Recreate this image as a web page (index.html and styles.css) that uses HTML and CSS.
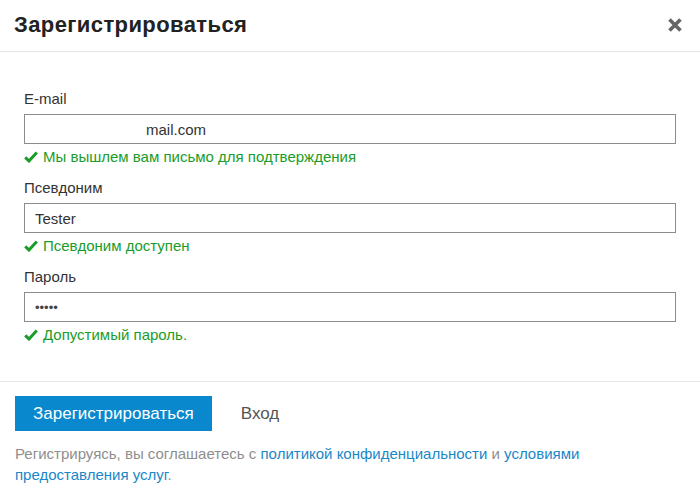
FILE: index.html
```html
<!DOCTYPE html>
<html lang="ru">
<head>
<meta charset="utf-8">
<title>Зарегистрироваться</title>
<link rel="stylesheet" href="styles.css">
</head>
<body>
<div class="dialog">
  <header class="dlg-head">
    <h1 class="dlg-title">Зарегистрироваться</h1>
    <button class="dlg-close" aria-label="Закрыть">
      <svg width="16" height="16" viewBox="0 0 16 16"><path d="M2.5 2.5 L13.5 13.5 M13.5 2.5 L2.5 13.5" stroke="#666" stroke-width="3.6" stroke-linecap="butt"/></svg>
    </button>
  </header>
  <div class="dlg-body">
    <div class="field">
      <label class="field-label">E-mail</label>
      <div class="input email"><span class="val">mail.com</span></div>
      <div class="help"><svg class="check" width="14" height="12" viewBox="0 0 14 12"><path d="M1.2 6.4 L5 10 L12.8 1.6" fill="none" stroke="#1a9c28" stroke-width="3"/></svg>Мы вышлем вам письмо для подтверждения</div>
    </div>
    <div class="field">
      <label class="field-label">Псевдоним</label>
      <div class="input"><span class="val">Tester</span></div>
      <div class="help"><svg class="check" width="14" height="12" viewBox="0 0 14 12"><path d="M1.2 6.4 L5 10 L12.8 1.6" fill="none" stroke="#1a9c28" stroke-width="3"/></svg>Псевдоним доступен</div>
    </div>
    <div class="field">
      <label class="field-label">Пароль</label>
      <div class="input"><span class="val dots">•••••</span></div>
      <div class="help"><svg class="check" width="14" height="12" viewBox="0 0 14 12"><path d="M1.2 6.4 L5 10 L12.8 1.6" fill="none" stroke="#1a9c28" stroke-width="3"/></svg>Допустимый пароль.</div>
    </div>
  </div>
  <footer class="dlg-foot">
    <div class="actions">
      <button class="btn-primary">Зарегистрироваться</button>
      <button class="btn-link">Вход</button>
    </div>
    <p class="terms">Регистрируясь, вы соглашаетесь с <a href="#">политикой конфиденциальности</a> и <a href="#">условиями предоставления услуг</a>.</p>
  </footer>
</div>
</body>
</html>
```

FILE: styles.css
```css
html, body {
  margin: 0;
  padding: 0;
  background: #fff;
}
body {
  font-family: "Liberation Sans", Arial, sans-serif;
  color: #333;
  width: 700px;
}
.dialog {
  display: flex;
  flex-direction: column;
}
.dlg-head {
  height: 51px;
  border-bottom: 1px solid #e6e6e6;
  display: flex;
  align-items: center;
  justify-content: space-between;
  padding: 0 17px 0 14px;
}
.dlg-title {
  margin: 0;
  font-size: 22px;
  letter-spacing: 0.4px;
  font-weight: bold;
  color: #222;
  line-height: 24px;
  padding-bottom: 2px;
}
.dlg-close {
  border: 0;
  background: none;
  padding: 0;
  width: 17px;
  height: 16px;
  display: flex;
  align-items: center;
  justify-content: center;
  margin-bottom: 1px;
}
.dlg-body {
  padding: 37px 24px 36px 24px;
  display: flex;
  flex-direction: column;
  gap: 11px;
}
.field {
  display: flex;
  flex-direction: column;
}
.field-label {
  font-size: 15px;
  line-height: 20px;
  color: #333;
  margin-bottom: 5px;
}
.input {
  box-sizing: border-box;
  height: 30px;
  border: 1px solid #8c8c8c;
  display: flex;
  align-items: center;
  padding: 0 10px;
  font-size: 15px;
  color: #333;
}
.input.email .val {
  padding-left: 111px;
}
.dots {
  font-size: 13px;
  color: #444;
}
.help {
  display: flex;
  align-items: center;
  gap: 5px;
  font-size: 15px;
  line-height: 20px;
  color: #1a9c28;
  margin-top: 3px;
}
.check {
  flex: none;
}
.dlg-foot {
  border-top: 1px solid #e6e6e6;
  padding: 14px 15px 0 15px;
}
.actions {
  display: flex;
  align-items: center;
  gap: 12px;
}
.btn-primary {
  height: 35px;
  border: 0;
  background: #0a88cd;
  color: #fff;
  font-family: inherit;
  font-size: 17px;
  padding: 0 18px;
  margin: 0;
}
.btn-link {
  border: 0;
  background: none;
  font-family: inherit;
  font-size: 17px;
  color: #555;
  padding: 0 17px;
  height: 35px;
}
.terms {
  margin: 12px 0 0 0;
  max-width: 600px;
  font-size: 15px;
  line-height: 21px;
  color: #8e8e8e;
}
.terms a {
  color: #1a87c8;
  text-decoration: none;
}
```
